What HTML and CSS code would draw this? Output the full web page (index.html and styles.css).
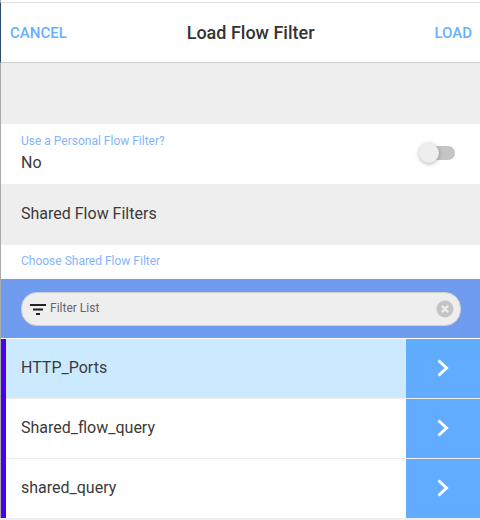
FILE: index.html
```html
<!DOCTYPE html>
<html lang="en">
<head>
    <meta charset="UTF-8">
    <title>Load Flow Filter</title>
    <link rel="stylesheet" href="styles.css">
</head>
<body>
    <div class="app-container">
        <div class="nav-bar">
            <span class="nav-btn">CANCEL</span>
            <span class="nav-title">Load Flow Filter</span>
            <span class="nav-btn">LOAD</span>
        </div>
        <div class="divider-empty"></div>
        <div class="toggle-row">
            <div>
                <div class="field-label">Use a Personal Flow Filter?</div>
                <div class="field-value">No</div>
            </div>
            <div class="toggle">
                <div class="toggle-knob"></div>
            </div>
        </div>
        <div class="divider-title">Shared Flow Filters</div>
        <div class="choose-row">
            <div class="field-label">Choose Shared Flow Filter</div>
        </div>
        <div class="search-bar">
            <div class="search-box">
                <svg class="filter-icon" width="16" height="12" viewBox="0 0 16 12"><path d="M0 1h16v2H0zM3 5.500h10v2H3zM6 10h4v2H6z" fill="#222"/></svg>
                <span class="search-text">Filter List</span>
                <svg class="clear-icon" width="18" height="18" viewBox="0 0 18 18"><circle cx="9" cy="9" r="8.500" fill="#c4c4c4"/><path d="M5.800 5.800l6.400 6.400M12.200 5.800l-6.400 6.400" stroke="#eee" stroke-width="2.200"/></svg>
            </div>
        </div>
        <ul class="filter-list">
            <li class="filter-item selected">
                <span class="filter-name">HTTP_Ports</span>
                <span class="filter-go"><svg width="14" height="18" viewBox="0 0 14 18"><path d="M2.500 1.500l8 7.500-8 7.500" fill="none" stroke="#fff" stroke-width="3"/></svg></span>
            </li>
            <li class="filter-item">
                <span class="filter-name">Shared_flow_query</span>
                <span class="filter-go"><svg width="14" height="18" viewBox="0 0 14 18"><path d="M2.500 1.500l8 7.500-8 7.500" fill="none" stroke="#fff" stroke-width="3"/></svg></span>
            </li>
            <li class="filter-item">
                <span class="filter-name">shared_query</span>
                <span class="filter-go"><svg width="14" height="18" viewBox="0 0 14 18"><path d="M2.500 1.500l8 7.500-8 7.500" fill="none" stroke="#fff" stroke-width="3"/></svg></span>
            </li>
        </ul>
    </div>
</body>
</html>
```

FILE: styles.css
```css
html, body {
    margin: 0;
    padding: 0;
    height: 520px;
    overflow: hidden;
    background: #eeeeee;
}
body {
    font-family: Roboto, "Liberation Sans", sans-serif;
    color: #333;
}
.app-container {
    display: flex;
    flex-direction: column;
    padding-top: 2px;
    background: white;
    border-left: 1px solid #aaa;
}
.nav-bar {
    height: 59px;
    display: flex;
    align-items: center;
    justify-content: space-between;
    padding: 0 8px 0 9px;
    background: white;
    border-top: 1px solid #e2e2e2;
    border-bottom: 1px solid #d0d0d0;
    border-left: 1px solid #2c4a6e;
    margin-left: -1px;
}
.nav-btn {
    font-size: 15px;
    font-weight: 500;
    color: #66b0ff;
}
.nav-title {
    font-size: 18px;
    font-weight: 500;
    color: #333;
}
.divider-empty {
    height: 61px;
    background: #eeeeee;
}
.toggle-row {
    height: 60px;
    box-sizing: border-box;
    display: flex;
    align-items: center;
    justify-content: space-between;
    padding: 0 25px 0 20px;
    background: white;
}
.field-label {
    font-size: 12px;
    color: #86b4fb;
    margin-top: -3px;
}
.field-value {
    font-size: 16px;
    color: #3a3a3a;
    margin-top: 5px;
}
.toggle {
    position: relative;
    width: 28px;
    height: 14px;
    margin-bottom: 2px;
    border-radius: 7px;
    background: #c4c4c4;
}
.toggle-knob {
    position: absolute;
    left: -8px;
    top: -3px;
    width: 20px;
    height: 20px;
    border-radius: 50%;
    background: #eeeeee;
    box-shadow: 0 1px 4px rgba(0, 0, 0, 0.3);
}
.divider-title {
    height: 59px;
    padding-bottom: 2px;
    display: flex;
    align-items: center;
    padding-left: 20px;
    font-size: 16px;
    color: #3a3a3a;
    background: #eeeeee;
}
.choose-row {
    height: 32px;
    padding-bottom: 2px;
    display: flex;
    align-items: center;
    padding-left: 20px;
    background: white;
}
.choose-row .field-label {
    margin-top: 0;
}
.search-bar {
    height: 59px;
    box-sizing: border-box;
    display: flex;
    align-items: center;
    padding: 0 19px 0 20px;
    background: #6f9cee;
}
.search-box {
    flex: 1;
    height: 32px;
    display: flex;
    align-items: center;
    padding: 0 6px 0 8px;
    background: #eeeeee;
    border: 1px solid #cfcfcf;
    border-radius: 16px;
}
.filter-icon {
    margin-right: 4px;
}
.search-text {
    flex: 1;
    font-size: 12px;
    color: #666;
    margin-bottom: 2px;
}
.filter-list {
    list-style-type: none;
    margin: 1px 0 0 0;
    padding: 0;
    border-left: 5px solid #4a00ee;
    background: white;
}
.filter-item {
    height: 59px;
    display: flex;
    align-items: center;
    justify-content: space-between;
    background: white;
    border-bottom: 1px solid #eeeeee;
}
.filter-item:last-child {
    border-bottom: none;
}
.filter-item.selected {
    background: #cceaff;
}
.filter-name {
    font-size: 16px;
    padding-left: 15px;
    padding-bottom: 2px;
    color: #3a3a3a;
}
.filter-go {
    width: 74px;
    height: 100%;
    padding-bottom: 2px;
    box-sizing: border-box;
    display: flex;
    align-items: center;
    justify-content: center;
    background: #61acfe;
}
```
